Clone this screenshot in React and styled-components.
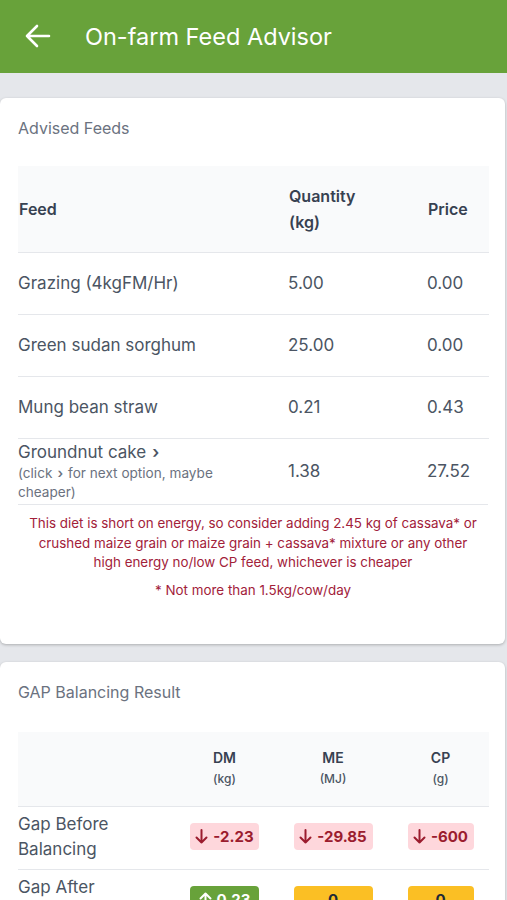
import styled, { createGlobalStyle } from "styled-components"

const Global = createGlobalStyle`
  body {
    margin: 0;
    background: #e5e7eb;
    font-family: Inter, "Noto Sans", sans-serif;
  }
`

const Page = styled.div`
  min-height: 900px;
  background: #e5e7eb;
`
const Header = styled.header`
  height: 73px;
  background: #68a23a;
  display: flex;
  align-items: center;
  padding-left: 24px;
  box-sizing: border-box;
`
const Back = styled.svg`
  width: 28px;
  height: 28px;
  margin-right: 33px;
  margin-top: -2px;
`
const Title = styled.h1`
  margin: 0;
  color: #fff;
  font-size: 23.5px;
  font-weight: 400;
  margin-top: -1px;
`
const Body = styled.div`
  padding-top: 25px;
  display: flex;
  flex-direction: column;
  gap: 18px;
`
const Card = styled.section`
  background: #fff;
  width: 505px;
  border-radius: 6px;
  box-shadow: 0 1px 3px rgba(0, 0, 0, 0.25);
  padding: 20px 17px ${p => p.$pb || 0}px 18px;
  box-sizing: border-box;
`
const CardTitle = styled.h2`
  margin: 0;
  font-size: 16px;
  font-weight: 400;
  color: #6b7280;
  line-height: 20px;
`
const Table = styled.table`
  width: 471px;
  border-collapse: collapse;
  table-layout: fixed;
  margin-top: ${p => p.$mt}px;
`
const HeadRow = styled.tr`
  background: #f9fafb;
  height: ${p => p.$h}px;
  border-bottom: 1px solid #e5e7eb;
`
const Th = styled.th`
  text-align: left;
  font-size: 16px;
  font-weight: 600;
  color: #374151;
  line-height: 26px;
  padding: 0 10px 0 1px;
`
const SmallTh = styled.th`
  text-align: center;
  font-size: 14px;
  font-weight: 600;
  color: #374151;
  line-height: 21px;
  padding: 0 0 2px;
`
const Unit = styled.div`
  font-size: 12px;
  font-weight: 500;
  color: #4b5563;
`
const Row = styled.tr`
  height: ${p => p.$h}px;
  border-bottom: ${p => p.$last ? "none" : "1px solid #e5e7eb"};
`
const Td = styled.td`
  font-size: 17px;
  color: #4b5563;
  line-height: 25px;
  padding: 0 10px ${p => p.$pb || 0}px 0;
`
const BadgeCell = styled.td`
  padding: 0 0 3px;
  text-align: center;
`
const Sub = styled.div`
  font-size: 13.6px;
  line-height: 19px;
  color: #6b7280;
  max-width: 240px;
`
const Chev = styled.span`
  font-weight: 600;
  line-height: 1;
  margin: 0 ${p => p.$gap || 5}px;
`
const Note = styled.p`
  margin: ${p => p.$mt}px 0 0;
  text-align: center;
  color: #a2213a;
  font-size: 13.4px;
  line-height: 19.5px;
  padding: 0 8px;
`
const Badge = styled.span`
  display: inline-flex;
  align-items: center;
  justify-content: center;
  gap: 5px;
  height: 27px;
  width: ${p => p.$w}px;
  border-radius: 4px;
  font-size: 15px;
  font-weight: 700;
  background: ${p => p.$bg};
  color: ${p => p.$fg};
`

const Arrow = ({ up }) => (
  <svg width="13" height="15" viewBox="0 0 13 15" fill="none" stroke="currentColor" strokeWidth="2" strokeLinecap="round" strokeLinejoin="round">
    {up ? <path d="M6.5 14V1.5M1.5 6.5l5-5 5 5" /> : <path d="M6.5 1v12.5M1.5 8.5l5 5 5-5" />}
  </svg>
)

const feeds = [
  ["Grazing (4kgFM/Hr)", "5.00", "0.00"],
  ["Green sudan sorghum", "25.00", "0.00"],
  ["Mung bean straw", "0.21", "0.43"],
]

const red = { $bg: "#fed7dc", $fg: "#9b1c2e" }
const yellow = { $bg: "#fbbf24", $fg: "#1f2937" }

export default function App() {
  return (
    <Page>
      <Global />
      <Header>
        <Back viewBox="0 0 28 28" fill="none" stroke="#fff" strokeWidth="2.6" strokeLinecap="round" strokeLinejoin="round">
          <path d="M25 14H3M13 4L3 14l10 10" />
        </Back>
        <Title>On-farm Feed Advisor</Title>
      </Header>
      <Body>
        <Card $pb={44}>
          <CardTitle>Advised Feeds</CardTitle>
          <Table $mt={28}>
            <colgroup>
              <col style={{ width: 270 }} />
              <col style={{ width: 139 }} />
              <col />
            </colgroup>
            <thead>
              <HeadRow $h={86}>
                <Th>Feed</Th>
                <Th>Quantity<br />(kg)</Th>
                <Th>Price</Th>
              </HeadRow>
            </thead>
            <tbody>
              {feeds.map(f => (
                <Row key={f[0]} $h={62}>
                  <Td>{f[0]}</Td>
                  <Td>{f[1]}</Td>
                  <Td>{f[2]}</Td>
                </Row>
              ))}
              <Row $h={66} $last>
                <Td>
                  <div style={{ lineHeight: "24px" }}>Groundnut cake<Chev $gap={6}>›</Chev></div>
                  <Sub>(click<Chev>›</Chev>for next option, maybe cheaper)</Sub>
                </Td>
                <Td>1.38</Td>
                <Td>27.52</Td>
              </Row>
            </tbody>
          </Table>
          <div style={{ borderTop: "1px solid #e5e7eb" }} />
          <Note $mt={9}>
            This diet is short on energy, so consider adding 2.45 kg of cassava* or crushed maize grain or maize grain + cassava* mixture or any other high energy no/low CP feed, whichever is cheaper
          </Note>
          <Note $mt={8}>* Not more than 1.5kg/cow/day</Note>
        </Card>
        <Card $pb={40}>
          <CardTitle>GAP Balancing Result</CardTitle>
          <Table $mt={30}>
            <colgroup>
              <col style={{ width: 157 }} />
              <col style={{ width: 99 }} />
              <col style={{ width: 118 }} />
              <col />
            </colgroup>
            <thead>
              <HeadRow $h={74}>
                <SmallTh />
                <SmallTh>DM<Unit>(kg)</Unit></SmallTh>
                <SmallTh>ME<Unit>(MJ)</Unit></SmallTh>
                <SmallTh>CP<Unit>(g)</Unit></SmallTh>
              </HeadRow>
            </thead>
            <tbody>
              <Row $h={63}>
                <Td $pb={2}>Gap Before<br />Balancing</Td>
                <BadgeCell><Badge $w={69} {...red}><Arrow />-2.23</Badge></BadgeCell>
                <BadgeCell><Badge $w={79} {...red}><Arrow />-29.85</Badge></BadgeCell>
                <BadgeCell><Badge $w={66} {...red}><Arrow />-600</Badge></BadgeCell>
              </Row>
              <Row $h={63} $last>
                <Td $pb={2}>Gap After<br />Balancing</Td>
                <BadgeCell><Badge $w={69} $bg="#68a23a" $fg="#fff"><Arrow up />0.23</Badge></BadgeCell>
                <BadgeCell><Badge $w={79} {...yellow}>0</Badge></BadgeCell>
                <BadgeCell><Badge $w={66} {...yellow}>0</Badge></BadgeCell>
              </Row>
            </tbody>
          </Table>
        </Card>
      </Body>
    </Page>
  )
}
